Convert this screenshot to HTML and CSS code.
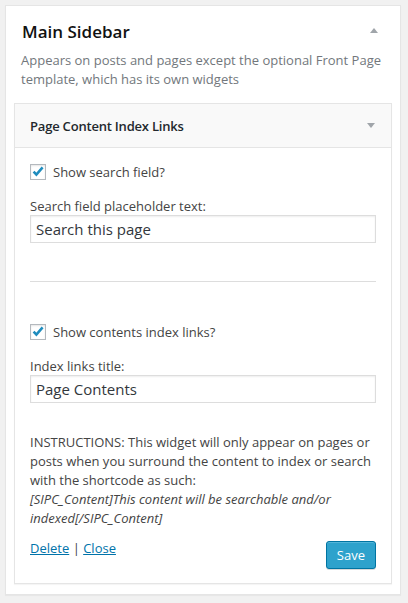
FILE: index.html
```html
<!DOCTYPE html>
<html>
<head>
<meta charset="utf-8">
<link rel="stylesheet" href="styles.css">
</head>
<body>
<div class="sidebar">
  <div class="sidebar-head">
    <h2 class="sidebar-title">Main Sidebar</h2>
    <span class="arrow-up"></span>
  </div>
  <p class="sidebar-desc">Appears on posts and pages except the optional Front Page template, which has its own widgets</p>
  <div class="widget">
    <div class="widget-top">
      <h3 class="widget-title">Page Content Index Links</h3>
      <span class="arrow-down"></span>
    </div>
    <div class="widget-inside">
      <label class="check-row">
        <span class="checkbox"><svg viewBox="0 0 16 16" width="16" height="16"><path d="M3.6 7.6 L6.4 10.6 L12.6 3.4" fill="none" stroke="#1e8cbe" stroke-width="2.6" stroke-linecap="butt" stroke-linejoin="miter"/></svg></span>
        <span>Show search field?</span>
      </label>
      <label class="field-label">Search field placeholder text:</label>
      <div class="text-input">Search this page</div>
      <hr class="sep">
      <label class="check-row second">
        <span class="checkbox"><svg viewBox="0 0 16 16" width="16" height="16"><path d="M3.6 7.6 L6.4 10.6 L12.6 3.4" fill="none" stroke="#1e8cbe" stroke-width="2.6" stroke-linecap="butt" stroke-linejoin="miter"/></svg></span>
        <span>Show contents index links?</span>
      </label>
      <label class="field-label">Index links title:</label>
      <div class="text-input">Page Contents</div>
      <p class="instructions">INSTRUCTIONS: This widget will only appear on pages or posts when you surround the content to index or search with the shortcode as such:<br><em>[SIPC_Content]This content will be searchable and/or indexed[/SIPC_Content]</em></p>
      <div class="widget-control">
        <div class="links"><a href="#">Delete</a> | <a href="#">Close</a></div>
        <button class="save">Save</button>
      </div>
    </div>
  </div>
</div>
</body>
</html>
```

FILE: styles.css
```css
html, body {
  margin: 0;
  padding: 0;
  background: #f1f1f1;
}
body {
  padding: 5px 7px 7px 5px;
  font-family: "Open Sans", sans-serif;
  font-size: 13px;
  color: #444;
}
.sidebar {
  background: #fff;
  border: 1px solid #e5e5e5;
  box-shadow: 0 1px 1px rgba(0,0,0,0.04);
  padding: 0 8px 10px 8px;
}
.sidebar-head {
  display: flex;
  align-items: center;
  justify-content: space-between;
  padding: 14px 14px 0 8px;
  height: 24px;
}
.sidebar-title {
  margin: 0;
  font-size: 17px;
  font-weight: 600;
  color: #111;
  line-height: 24px;
}
.arrow-up {
  width: 0;
  height: 0;
  border-left: 4.5px solid transparent;
  border-right: 4.5px solid transparent;
  border-bottom: 5px solid #a0a5aa;
  margin-bottom: 4px;
}
.sidebar-desc {
  margin: 7px 0 0 0;
  padding: 0 7px;
  line-height: 19px;
  color: #72777c;
}
.widget {
  margin-top: 14px;
  border: 1px solid #e5e5e5;
  box-shadow: 0 1px 1px rgba(0,0,0,0.04);
}
.widget-top {
  height: 43px;
  background: #f9f9f9;
  border-bottom: 1px solid #e5e5e5;
  display: flex;
  align-items: center;
  justify-content: space-between;
  padding: 0 16px 0 15px;
}
.widget-title {
  margin: 0;
  font-size: 13px;
  font-weight: 600;
  letter-spacing: -0.2px;
  color: #23282d;
}
.arrow-down {
  width: 0;
  height: 0;
  border-left: 4.5px solid transparent;
  border-right: 4.5px solid transparent;
  border-top: 5px solid #a0a5aa;
}
.widget-inside {
  padding: 15px 15px 14px 15px;
}
.check-row {
  display: flex;
  align-items: center;
  gap: 7px;
  height: 18px;
  line-height: 18px;
}
.check-row.second {
  margin-top: 41px;
}
.checkbox {
  box-sizing: border-box;
  width: 16px;
  height: 16px;
  border: 1px solid #b4b9be;
  background: #fff;
  box-shadow: inset 0 1px 2px rgba(0,0,0,0.1);
  position: relative;
  flex: none;
}
.checkbox svg {
  position: absolute;
  left: -1px;
  top: -1px;
}
.field-label {
  display: block;
  margin-top: 16px;
  line-height: 18px;
}
.text-input {
  box-sizing: border-box;
  height: 28px;
  border: 1px solid #ddd;
  box-shadow: inset 0 1px 2px rgba(0,0,0,0.07);
  padding: 0 5px;
  font-size: 15px;
  line-height: 26px;
  color: #32373c;
}
.sep {
  border: 0;
  border-top: 1px solid #ddd;
  margin: 38px 0 0 0;
  height: 0;
}
.instructions {
  margin: 30px 0 0 0;
  line-height: 19px;
  color: #444;
}
.instructions em {
  font-style: italic;
}
.widget-control {
  display: flex;
  justify-content: space-between;
  align-items: flex-start;
  margin-top: 13px;
}
.links {
  line-height: 19px;
  margin-top: -2px;
}
.links a {
  color: #0073aa;
  text-decoration: underline;
}
.save {
  font-family: "Open Sans", sans-serif;
  font-size: 13px;
  height: 28px;
  padding: 0 10px 1px;
  background: #2ea2cc;
  border: 1px solid #0074a2;
  border-radius: 3px;
  color: #fff;
  box-shadow: inset 0 1px 0 rgba(120,200,230,0.5), 0 1px 0 rgba(0,0,0,0.15);
}
```
